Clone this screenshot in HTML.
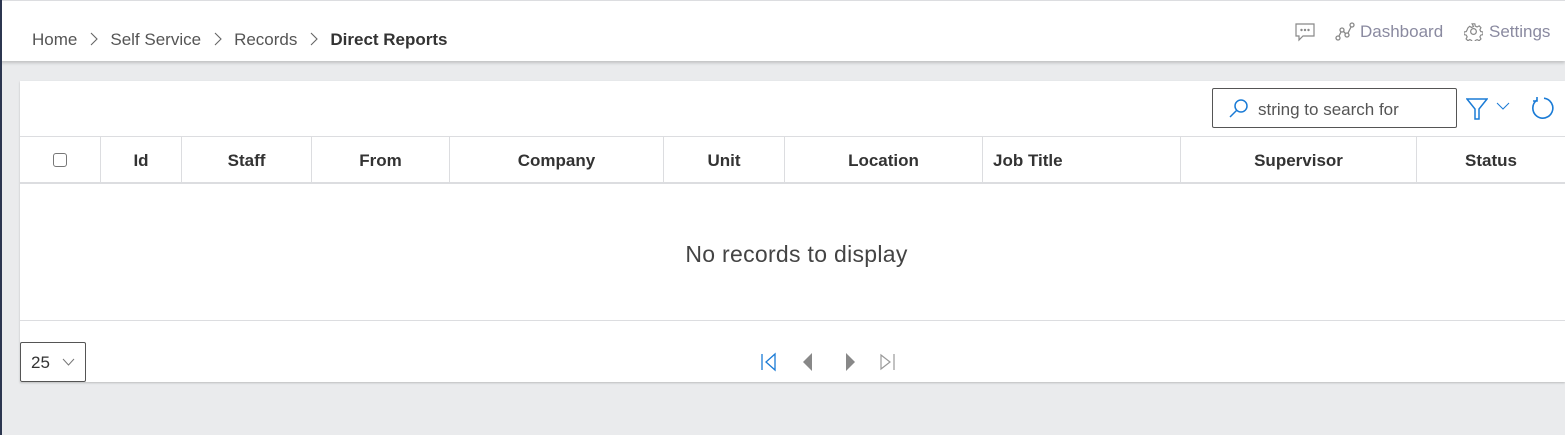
<!DOCTYPE html>
<html><head><style>
*{box-sizing:border-box;margin:0;padding:0}
body{width:1565px;height:435px;background:#eaebed;font-family:"Liberation Sans",sans-serif;position:relative;overflow:hidden}
.lb{position:absolute;left:0;top:0;width:2px;height:435px;background:#2c3650;z-index:5}
.hdr{position:absolute;left:0;top:0;width:1565px;height:61px;background:#fff;border-top:1px solid #dcdde0;box-shadow:0 2px 3px rgba(0,0,0,.18)}
.bc{position:absolute;left:32px;top:29px;font-size:17px;color:#555;white-space:nowrap}
.bc span{display:inline-block}
.bc svg{margin:0 12px 0 13px;vertical-align:-1px}
.bc b{color:#333}
.tr{position:absolute;top:21px;font-size:17px;color:#8a8aa0;white-space:nowrap}
.card{position:absolute;left:20px;top:81px;width:1545px;height:301px;background:#fff;box-shadow:0 1px 2px rgba(0,0,0,.2)}
.search{position:absolute;left:1192px;top:7px;width:245px;height:40px;border:1px solid #555;border-radius:2px;font-size:17px;color:#555}
.th{position:absolute;top:55px;left:0;width:1545px;height:48px;border-top:1px solid #dcdde0;border-bottom:2px solid #dcdde0}
.c{position:absolute;top:0;height:46px;border-left:1px solid #dcdde0;font-weight:bold;font-size:17px;color:#333;text-align:center;line-height:48px}
.nr{position:absolute;top:160px;left:0;width:1553px;text-align:center;font-size:23px;color:#444;letter-spacing:.3px}
.ft{position:absolute;top:239px;left:0;width:1545px;border-top:1px solid #dcdde0}
.sel{position:absolute;left:0;top:261px;width:66px;height:40px;border:1px solid #555;border-radius:2px;font-size:17px;color:#333}
</style></head><body>
<div class="lb"></div>
<div class="hdr">
<div class="bc"><span>Home</span><svg width="8" height="14" viewBox="0 0 8 14" fill="none" stroke="#666" stroke-width="1.1"><path d="M1 1l6 6-6 6"/></svg><span>Self Service</span><svg width="8" height="14" viewBox="0 0 8 14" fill="none" stroke="#666" stroke-width="1.1"><path d="M1 1l6 6-6 6"/></svg><span>Records</span><svg width="8" height="14" viewBox="0 0 8 14" fill="none" stroke="#666" stroke-width="1.1"><path d="M1 1l6 6-6 6"/></svg><b>Direct Reports</b></div>
<svg style="position:absolute;left:1295px;top:21px" width="20" height="20" viewBox="0 0 20 20" fill="none" stroke="#888" stroke-width="1.2"><path d="M1 2h18v12H8l-4 4v-4H1z"/><circle cx="6.5" cy="8" r=".6" fill="#888"/><circle cx="10" cy="8" r=".6" fill="#888"/><circle cx="13.5" cy="8" r=".6" fill="#888"/></svg>
<svg style="position:absolute;left:1335px;top:21px" width="20" height="20" viewBox="0 0 20 20" fill="none" stroke="#888" stroke-width="1.3"><circle cx="3" cy="16" r="2"/><circle cx="7" cy="8" r="2"/><circle cx="12" cy="13" r="2"/><circle cx="17" cy="3" r="2"/><path d="M4 14l2-4M8.5 9.5l2 2M13 11l3-6"/></svg>
<div class="tr" style="left:1360px">Dashboard</div>
<svg style="position:absolute;left:1464px;top:21px" width="19" height="19" viewBox="0 0 20 20" fill="none" stroke="#888" stroke-width="1.3"><circle cx="10" cy="10" r="3"/><path d="M8.5 1.5h3l.5 2.5 2 1 2.3-1.2 2 2-1.2 2.3 1 2 2.4.4v3l-2.4.5-1 2 1.2 2.2-2 2-2.3-1.2-2 1-.5 2.5h-3l-.5-2.5-2-1-2.2 1.2-2-2 1.2-2.2-1-2-2.5-.5v-3l2.5-.4 1-2L3.7 6.3l2-2L8 5.5l2-1z" transform="scale(.95) translate(.5 .5)"/></svg>
<div class="tr" style="left:1489px">Settings</div>
</div>
<div class="card">
<div class="search">
<svg style="position:absolute;left:16px;top:9px" width="20" height="20" viewBox="0 0 20 20" fill="none" stroke="#1a7bd6" stroke-width="1.5"><circle cx="12" cy="8" r="6"/><path d="M7.5 12.5L1 19"/></svg>
<span style="position:absolute;left:45px;top:11px">string to search for</span></div>
<svg style="position:absolute;left:1446px;top:16px" width="22" height="24" viewBox="0 0 22 24" fill="none" stroke="#1a7bd6" stroke-width="1.5"><path d="M1 2h20l-8 10v10h-4V12z"/></svg>
<svg style="position:absolute;left:1476px;top:20px" width="14" height="10" viewBox="0 0 14 10" fill="none" stroke="#1a7bd6" stroke-width="1"><path d="M1 2l6 6 6-6"/></svg>
<svg style="position:absolute;left:1510px;top:15px" width="24" height="24" viewBox="0 0 24 24" fill="none" stroke="#1a7bd6" stroke-width="1.6"><path d="M7 4A10 10 0 1 0 14 2.2"/><path d="M7 1v4H3"/></svg>
<div class="th">
<div class="c" style="left:0;width:80px;border-left:none"><span style="display:inline-block;width:14px;height:14px;border:1.5px solid #777;border-radius:3px;vertical-align:middle;margin-top:-4px"></span></div>
<div class="c" style="left:80px;width:81px">Id</div>
<div class="c" style="left:161px;width:130px">Staff</div>
<div class="c" style="left:291px;width:138px">From</div>
<div class="c" style="left:429px;width:214px">Company</div>
<div class="c" style="left:643px;width:121px">Unit</div>
<div class="c" style="left:764px;width:198px">Location</div>
<div class="c" style="left:962px;width:198px;text-align:left;padding-left:10px">Job Title</div>
<div class="c" style="left:1160px;width:236px">Supervisor</div>
<div class="c" style="left:1396px;width:149px">Status</div>
</div>
<div class="nr">No records to display</div>
<div class="ft"></div>
<div class="sel"><span style="position:absolute;left:10px;top:10px">25</span>
<svg style="position:absolute;left:41px;top:15px" width="13" height="9" viewBox="0 0 13 9" fill="none" stroke="#777" stroke-width="1"><path d="M1 1l5.5 6L12 1"/></svg></div>
<svg style="position:absolute;left:740px;top:271px" width="160" height="20" viewBox="0 0 160 20">
<path d="M2 2v16" stroke="#1a7bd6" stroke-width="1.3"/><path d="M15 2L6 10l9 8z" fill="none" stroke="#1a7bd6" stroke-width="1.3"/>
<path d="M52 1L43 10l9 9z" fill="#888"/>
<path d="M86 1l9 9-9 9z" fill="#888"/>
<path d="M121 3l9 7-9 7z" fill="none" stroke="#999" stroke-width="1.2"/><path d="M134 2v16" stroke="#999" stroke-width="1.2"/>
</svg>
</div>
</body></html>
